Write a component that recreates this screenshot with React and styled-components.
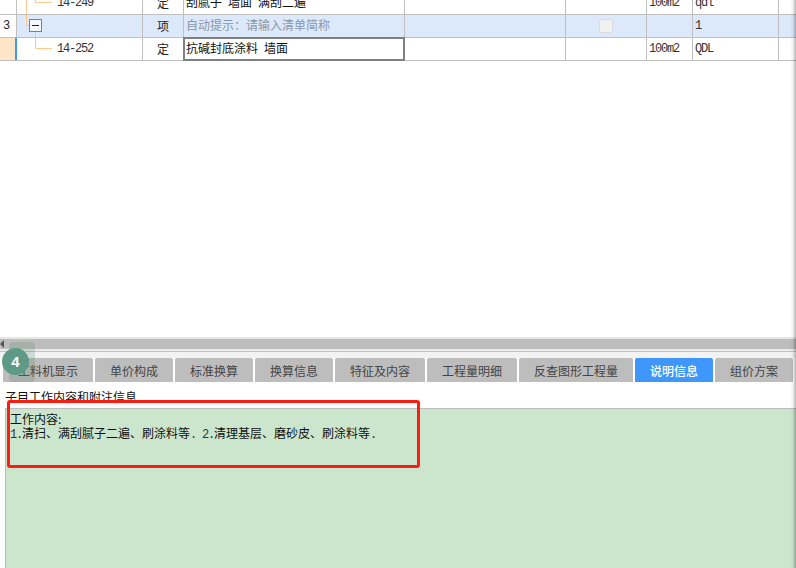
import React from 'react';
import styled, { createGlobalStyle } from 'styled-components';

const GlobalStyle = createGlobalStyle`
    html, body {
        margin: 0;
        background: #fff;
    }
`;

const cjk = '"Noto Sans CJK SC", "Liberation Sans", sans-serif';
const mono = '"Liberation Mono", "Noto Sans CJK SC", monospace';

const columns = '17px 126px 41px 221px 161px 81px 46px 86px 1fr';

const tabs = [
    { label: '工料机显示', width: 90 },
    { label: '单价构成', width: 78 },
    { label: '标准换算', width: 78 },
    { label: '换算信息', width: 78 },
    { label: '特征及内容', width: 90 },
    { label: '工程量明细', width: 90 },
    { label: '反查图形工程量', width: 114 },
    { label: '说明信息', width: 78, active: true },
    { label: '组价方案', width: 78 },
];

const Page = styled.div`
    position: relative;
    width: 796px;
    height: 568px;
    overflow: hidden;
    display: flex;
    flex-direction: column;
    background: #fff;
    font-family: ${cjk};
    font-size: 12px;
    color: #222;
`;

const TablePane = styled.div`
    height: 337px;
    flex: none;
    overflow: hidden;
`;

const Table = styled.div`
    margin-top: -8px;
`;

const Row = styled.div`
    display: grid;
    grid-template-columns: ${columns};
    height: 23px;
    background: ${({ highlighted }) => (highlighted ? '#dce9fb' : '#fff')};
    border-bottom: 1px solid #c0c0c0;
    box-sizing: border-box;
`;

const Cell = styled.div`
    display: flex;
    align-items: center;
    min-width: 0;
    box-sizing: border-box;
    padding-left: ${({ indent }) => indent || 0}px;
    padding-bottom: ${({ raised }) => raised || 0}px;
    border-right: 1px solid #c0c0c0;
    white-space: nowrap;
    justify-content: ${({ center }) => (center ? 'center' : 'flex-start')};
    color: ${({ muted }) => (muted ? '#8b97a8' : 'inherit')};

    &:last-child {
        border-right: 0;
    }
`;

const RowHeader = styled(Cell)`
    background: ${({ current }) => (current ? '#ffe6c8' : '#fff')};
    border-right: ${({ current }) =>
        current ? '2px solid #3f97f6' : '1px solid #c0c0c0'};
    padding-left: 3px;
    font-family: ${mono};
    font-size: 12px;
`;

const Latin = styled.span`
    font-family: ${mono};
    font-size: 12px;
    letter-spacing: -1.2px;
    color: #333;
`;

const NameText = styled.span`
    font-family: ${mono};
    word-spacing: -1.2px;
    color: #111;
`;

const EditCell = styled(Cell)`
    outline: 2px solid #808080;
    outline-offset: -2px;
    margin: -1px 0 -1px -1px;
    padding-left: 3px;
    background: #fff;
    border-right: 0;
`;

const CheckBox = styled.span`
    display: block;
    width: 12px;
    height: 12px;
    background: #f0f0f0;
    border: 1px solid #dcdcdc;
    border-radius: 2px;
`;

const TreeSvg = styled.svg`
    flex: none;
    display: block;
`;

const TreeLines = ({ kind }) => (
    <TreeSvg width="40" height="22" viewBox="0 0 40 22" fill="none">
        <g stroke="#ffc88a">
            {kind === 'leafAbove' && (
                <>
                    <path d="M9.5 0V22" />
                    <path d="M18.5 0V10.5H35" />
                </>
            )}
            {kind === 'group' && (
                <>
                    <path d="M9.5 0V10.5H12" />
                    <path d="M18.5 16V22" />
                </>
            )}
            {kind === 'leaf' && <path d="M18.5 0V10.5H35" />}
        </g>
        {kind === 'group' && (
            <>
                <rect x="12.5" y="4.5" width="12" height="12" fill="#f4f7fc" stroke="#808080" />
                <path d="M15 10.5H22" stroke="#222" />
            </>
        )}
    </TreeSvg>
);

const ScrollBar = styled.div`
    position: relative;
    flex: none;
    height: 15px;
    box-sizing: border-box;
    background: #bdbdbd;
    border-top: 2px solid #e6e6e6;
    border-bottom: 1px solid #c4c4c4;
    box-shadow: inset 0 -2px 0 #ececec;
`;

const ScrollArrow = styled.span`
    position: absolute;
    left: 0;
    top: 1px;
    border-style: solid;
    border-width: 4px 4px 4px 0;
    border-color: transparent #555 transparent transparent;
`;

const TabStrip = styled.div`
    flex: none;
    height: 30px;
    box-sizing: border-box;
    padding: 6px 0 0 3px;
    display: flex;
    gap: 2px;
    background: linear-gradient(#f3f3f3 6px, #fff 6px);
`;

const Tab = styled.div`
    width: ${({ width }) => width}px;
    flex: none;
    display: flex;
    align-items: center;
    justify-content: center;
    border-radius: 2px 2px 0 0;
    background: ${({ active }) => (active ? '#3f97fb' : '#bdbdbd')};
    color: ${({ active }) => (active ? '#fff' : '#444')};
    font-weight: ${({ active }) => (active ? 500 : 400)};
`;

const SectionTitle = styled.div`
    flex: none;
    height: 26px;
    box-sizing: border-box;
    padding: 7px 0 0 5px;
    line-height: 16px;
    color: #111;
`;

const NotePanel = styled.div`
    flex: 1;
    margin-left: 5px;
    padding: 3px 4px;
    background: #cce6cd;
    border-top: 1px solid #bcbcbc;
    border-left: 1px solid #bcbcbc;
    line-height: 14px;
    color: #111;
    white-space: pre;
`;

const RedFrame = styled.div`
    position: absolute;
    left: 7px;
    top: 400px;
    width: 413px;
    height: 68px;
    box-sizing: border-box;
    border: 3px solid #fb1d10;
    border-radius: 3px;
`;

const StepHalo = styled.div`
    position: absolute;
    left: 9px;
    top: 342px;
    width: 26px;
    height: 40px;
    border-radius: 4px;
    background: rgba(86, 130, 110, 0.22);
`;

const StepBadge = styled.div`
    position: absolute;
    left: 2px;
    top: 348px;
    width: 27px;
    height: 27px;
    display: flex;
    align-items: center;
    justify-content: center;
    border-radius: 50%;
    background: #5f9a86;
    color: #fff;
    font-family: "Liberation Sans", sans-serif;
    font-size: 15px;
    font-weight: 700;
`;

const EdgeShade = styled.div`
    position: absolute;
    top: 0;
    right: 0;
    bottom: 0;
    width: 6px;
    background: linear-gradient(
        to right,
        rgba(0, 0, 0, 0),
        rgba(0, 0, 0, 0.06) 50%,
        rgba(0, 0, 0, 0.3)
    );
`;

const App = () => (
    <Page>
        <GlobalStyle />
        <TablePane>
            <Table>
                <Row>
                    <RowHeader />
                    <Cell>
                        <TreeLines kind="leafAbove" />
                        <Latin>14-249</Latin>
                    </Cell>
                    <Cell center raised={2}>定</Cell>
                    <Cell indent={2} raised={2}>
                        <NameText>刮腻子 墙面 满刮二遍</NameText>
                    </Cell>
                    <Cell />
                    <Cell />
                    <Cell indent={2}>
                        <Latin>100m2</Latin>
                    </Cell>
                    <Cell indent={2}>
                        <Latin>qdl</Latin>
                    </Cell>
                    <Cell />
                </Row>
                <Row highlighted>
                    <RowHeader>3</RowHeader>
                    <Cell>
                        <TreeLines kind="group" />
                    </Cell>
                    <Cell center raised={2}>项</Cell>
                    <Cell indent={2} raised={3} muted>
                        自动提示：请输入清单简称
                    </Cell>
                    <Cell />
                    <Cell center>
                        <CheckBox />
                    </Cell>
                    <Cell />
                    <Cell indent={2}>
                        <Latin>1</Latin>
                    </Cell>
                    <Cell />
                </Row>
                <Row>
                    <RowHeader current />
                    <Cell>
                        <TreeLines kind="leaf" />
                        <Latin>14-252</Latin>
                    </Cell>
                    <Cell center raised={2}>定</Cell>
                    <EditCell raised={2}>
                        <NameText>抗碱封底涂料 墙面</NameText>
                    </EditCell>
                    <Cell />
                    <Cell />
                    <Cell indent={2}>
                        <Latin>100m2</Latin>
                    </Cell>
                    <Cell indent={2}>
                        <Latin>QDL</Latin>
                    </Cell>
                    <Cell />
                </Row>
            </Table>
        </TablePane>
        <ScrollBar>
            <ScrollArrow />
        </ScrollBar>
        <TabStrip>
            {tabs.map(({ label, width, active }) => (
                <Tab key={label} width={width} active={active}>
                    {label}
                </Tab>
            ))}
        </TabStrip>
        <SectionTitle>子目工作内容和附注信息</SectionTitle>
        <NotePanel>
            工作内容:{'\n'}
            <Latin>1.</Latin>清扫、满刮腻子二遍、刷涂料等<Latin>. 2.</Latin>清理基层、磨砂皮、刷涂料等<Latin>.</Latin>
        </NotePanel>
        <EdgeShade />
        <RedFrame />
        <StepHalo />
        <StepBadge>4</StepBadge>
    </Page>
);

export default App;
